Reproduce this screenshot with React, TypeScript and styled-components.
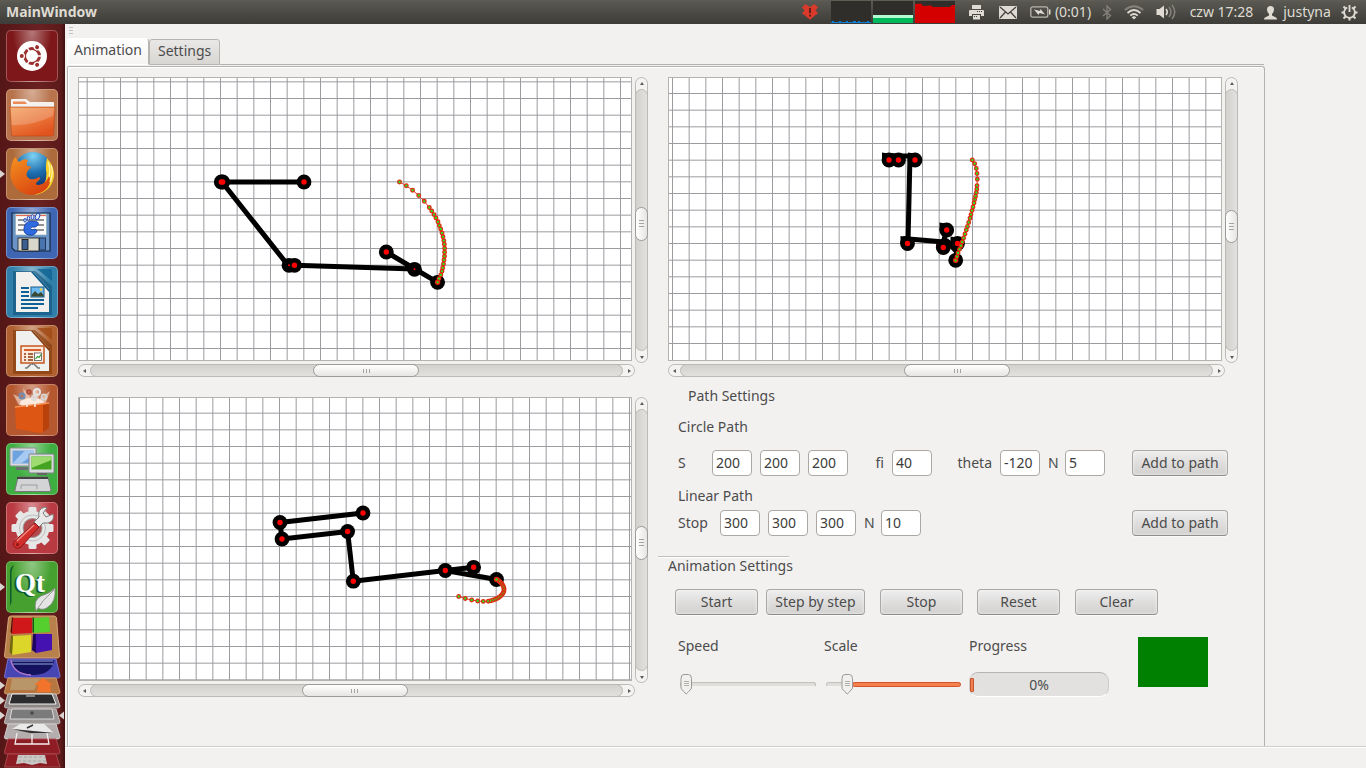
import React, { useState } from "react";
import styled, { createGlobalStyle, css } from "styled-components";

const Global = createGlobalStyle`
  *, *::before, *::after { box-sizing: border-box; }
  body {
    margin: 0;
    background: #f2f1f0;
    color: #4c4c4c;
    font: 14px/20px "Noto Sans", "Open Sans", sans-serif;
  }
  button, input { font: inherit; color: inherit; margin: 0; }
`;

/* ---------- shell ---------- */

const Screen = styled.div`
  display: flex;
  flex-direction: column;
  height: 100vh;
  overflow: hidden;
`;

const TopBar = styled.header`
  display: flex;
  flex: none;
  align-items: center;
  justify-content: space-between;
  height: 24px;
  padding: 0 0 0 6px;
  background: linear-gradient(#5f5d54 0, #57564f 3px, #3d3c38 100%);
  color: #dfdbd2;
`;

const AppTitle = styled.h1`
  margin: 0;
  font-size: 14px;
  line-height: 24px;
  font-weight: 700;
`;

const Indicators = styled.div`
  display: flex;
  align-items: center;
  height: 24px;
  svg { display: block; flex: none; }
`;

const Indicator = styled.div<{ $w: number }>`
  display: flex;
  align-items: center;
  justify-content: center;
  width: ${(p) => p.$w}px;
  height: 24px;
  white-space: nowrap;
`;

const Body = styled.div`
  display: flex;
  flex: 1;
  min-height: 0;
`;

const Launcher = styled.nav`
  display: flex;
  flex: none;
  flex-direction: column;
  gap: 7px;
  width: 65px;
  padding-top: 6px;
  overflow: hidden;
  background: linear-gradient(90deg, #541616, #6a2020 60%, #5c1a1a 94%, #3f0f0f);
`;

const Tile = styled.button<{ $bg: string; $running?: boolean }>`
  position: relative;
  flex: none;
  width: 52px;
  height: 52px;
  margin-left: 6px;
  padding: 0;
  border: 1px solid rgba(255, 255, 255, 0.28);
  border-radius: 5px;
  background: radial-gradient(ellipse at 50% 0, rgba(255, 255, 255, 0.42), transparent 55%), ${(p) => p.$bg};
  svg { display: block; width: 50px; height: 50px; }
  ${(p) =>
    p.$running &&
    css`
      &::before {
        content: "";
        position: absolute;
        left: -7px;
        top: 21px;
        border: 4px solid transparent;
        border-left: 5px solid #d9d4cf;
        border-right: 0;
      }
    `}
`;

const Stack = styled.div`
  flex: none;
  margin-top: -5px;
  svg { display: block; }
`;

const Window = styled.main`
  display: flex;
  flex: 1;
  flex-direction: column;
  min-width: 0;
`;

const ToolStrip = styled.div`
  flex: none;
  height: 14px;
  padding: 3px 4px;
  svg { display: block; }
`;

const Tabs = styled.div`
  display: flex;
  flex: none;
  width: 100%;
  max-width: 1199px;
  height: 27px;
  padding-left: 2px;
  &::after {
    content: "";
    flex: 1;
    border-bottom: 1px solid #b4b2ae;
  }
`;

const Tab = styled.button<{ $active?: boolean }>`
  margin-top: 1px;
  padding: 0 8px 2px;
  border: 1px solid #b8b5b1;
  border-radius: 3px 3px 0 0;
  background: linear-gradient(#e9e8e6, #d8d6d3);
  line-height: 20px;
  ${(p) =>
    p.$active &&
    css`
      margin-top: 0;
      padding: 0 6px 4px;
      border-color: #fff #b8b5b1 transparent #fff;
      background: linear-gradient(#fff, #f5f4f3);
    `}
`;

const Pane = styled.section`
  display: flex;
  flex: 1;
  align-items: flex-start;
  gap: 20px;
  width: 100%;
  max-width: 1198px;
  margin-top: 1px;
  margin-left: 2px;
  padding: 10px 26px 0 10px;
  border: solid #b4b2ae;
  border-width: 1px 1px 0 1px;
  border-radius: 2px 3px 0 0;
  box-shadow: inset 1px 1px 0 #fff;
`;

const StatusBar = styled.footer`
  flex: none;
  height: 22px;
  border-top: 1px solid #cfcdca;
  box-shadow: inset 0 1px 0 #fff;
`;

const Column = styled.div<{ $gap: number }>`
  display: flex;
  flex: 1 1 0;
  flex-direction: column;
  gap: ${(p) => p.$gap}px;
  min-width: 0;
`;

/* ---------- viewports ---------- */

const ViewGrid = styled.div`
  display: grid;
  grid-template-columns: minmax(0, 1fr) 13px;
  grid-template-rows: 287px 13px;
`;

const Canvas = styled.div`
  margin: 0 3px 3px 0;
  border: 1px solid #b5b3b0;
  background: #fff;
  svg { display: block; width: 100%; height: 100%; }
`;

const Bar = styled.div<{ $vertical?: boolean }>`
  display: flex;
  flex-direction: ${(p) => (p.$vertical ? "column" : "row")};
  margin-bottom: ${(p) => (p.$vertical ? 1 : 0)}px;
  border: 1px solid #bcbab7;
  border-radius: 7px;
  background: #f4f3f2;
`;

const Arrow = styled.button`
  display: flex;
  flex: none;
  align-items: center;
  justify-content: center;
  width: 11px;
  height: 11px;
  padding: 0;
  border: 0;
  background: none;
`;

const Track = styled.div<{ $vertical?: boolean }>`
  position: relative;
  flex: 1;
  margin: ${(p) => (p.$vertical ? "0 -1px" : "-1px 0")};
  border: 1px solid #bcbab7;
  border-radius: 7px;
  background: linear-gradient(${(p) => (p.$vertical ? "90deg" : "180deg")}, #d3d1ce, #e2e1df);
`;

const Thumb = styled.div<{ $vertical?: boolean }>`
  position: absolute;
  display: flex;
  align-items: center;
  justify-content: center;
  border: 1px solid #9d9b98;
  border-radius: 7px;
  background: linear-gradient(${(p) => (p.$vertical ? "90deg" : "180deg")}, #fff, #e6e5e3);
  ${(p) => (p.$vertical ? "left: -1px; right: -1px; height: 13%;" : "top: -1px; bottom: -1px; width: 20%;")}
`;

type Pt = [number, number];

const ARROWS = {
  up: "1,4 5,4 3,1",
  down: "1,2 5,2 3,5",
  left: "4,1 4,5 1,3",
  right: "2,1 2,5 5,3",
};

function ArrowIcon({ dir }: { dir: keyof typeof ARROWS }) {
  return (
    <svg width="6" height="6" viewBox="0 0 6 6">
      <polygon points={ARROWS[dir]} fill="#5c5b59" />
    </svg>
  );
}

function Scrollbar({ vertical, at }: { vertical?: boolean; at: number }) {
  return (
    <Bar $vertical={vertical}>
      <Arrow aria-label={vertical ? "Scroll up" : "Scroll left"}>
        <ArrowIcon dir={vertical ? "up" : "left"} />
      </Arrow>
      <Track $vertical={vertical}>
        <Thumb $vertical={vertical} style={vertical ? { top: `${at}%` } : { left: `${at}%` }}>
          <svg width="7" height="7" viewBox="0 0 7 7">
            <path
              d={vertical ? "M1 .5H6M1 3.5H6M1 6.5H6" : "M.5 2V6M3.5 2V6M6.5 2V6"}
              stroke="#a5a3a0"
            />
          </svg>
        </Thumb>
      </Track>
      <Arrow aria-label={vertical ? "Scroll down" : "Scroll right"}>
        <ArrowIcon dir={vertical ? "down" : "right"} />
      </Arrow>
    </Bar>
  );
}

interface Scene {
  name: string;
  origin: Pt;
  grid: Pt;
  links: string;
  blobs?: Pt[];
  joints: Pt[];
  path: Pt[];
  h: number;
  v: number;
}

const STEP = 50 / 3;

const front: Scene = {
  name: "Front view",
  origin: [79, 78],
  grid: [220.5, 98.5],
  links: "M304 182H222L288 265.3L294.5 265.3L414.5 269M386.3 252L437.6 282.3",
  joints: [[221.3, 182], [222.7, 182], [304, 182], [289, 265.3], [294.5, 265.3], [386.3, 252], [414.5, 269.3], [437.6, 282.3]],
  path: [
    [399.5, 182], [406.3, 185.7], [412.6, 190.2], [418.7, 195.5], [424.3, 201.3], [429.3, 207.5], [431.7, 211],
    [434, 214.6], [436, 218], [438, 221.8], [439.3, 225.6], [440.7, 229], [442, 233], [443, 236.8], [443.8, 240.6],
    [444.3, 244.3], [444.6, 248.3], [444.6, 252.3], [444.5, 256.3], [444, 260], [443.5, 264], [442.7, 268],
    [442, 271.3], [440.8, 275], [439, 278.6], [437.6, 282.3],
  ],
  h: 41.8,
  v: 45,
};

const side: Scene = {
  name: "Side view",
  origin: [669, 78],
  grid: [972.5, 143.5],
  links: "M884 156H914M910 155L908 242M903 238.5L950 242.5M946.7 230L942 247M957.5 243.5L955.7 260.3M946 240L957 252",
  blobs: [[882, 152.5], [891.5, 153], [908, 152.5], [900.5, 236], [939.5, 222.5], [936.3, 240.5], [950.5, 236.5]],
  joints: [[889, 160], [898.5, 160], [915, 160], [907.5, 243.5], [946.7, 230], [957.5, 243.5], [943.3, 247.5], [955.7, 260.3]],
  path: [
    [972.3, 160], [974.7, 163.7], [976.3, 168.5], [977, 173.5], [977.3, 179.3], [977, 185.6], [976.8, 189.2],
    [976.3, 192.6], [975.5, 196.2], [974.7, 199.6], [974, 203], [973, 207], [972, 210.6], [971, 214.6],
    [970, 218.3], [968.7, 222.4], [967.5, 226.5], [966.3, 230], [965, 234], [963.6, 238], [962.2, 242],
    [961, 245.7], [959.5, 249.3], [958, 253], [957, 256.6], [955.6, 260.5],
  ],
  h: 42,
  v: 46,
};

const top: Scene = {
  name: "Top view",
  origin: [79, 398],
  grid: [279.5, 496.5],
  links: "M363 513L280 522.5L282 539L347.6 531.5L353.3 581.2L445.3 570.5L473.6 567.3M445.3 570.5L496.5 579.5",
  joints: [[280, 522.5], [363, 513], [282, 539], [347.6, 531.5], [353.3, 581.2], [473.6, 567.3], [445.3, 570.5], [496.5, 579.5]],
  path: [
    [458.7, 596.5], [465.3, 598.5], [471.7, 600], [477.7, 601], [483.3, 601.4], [488.3, 601.2], [491, 600.7],
    [493.3, 600], [495.5, 599.3], [497.5, 598.3], [499.2, 597.2], [500.7, 596], [502, 594.6], [503, 593.2],
    [503.8, 591.6], [504, 590], [504, 588.5], [503.6, 587], [502.8, 585.5], [502, 584], [501, 583], [500, 582],
    [499, 581], [497.5, 580], [496.5, 579.5],
  ],
  h: 39.7,
  v: 44.6,
};

function gridLines(anchor: number, from: number, to: number) {
  const out: number[] = [];
  const first = anchor - Math.floor((anchor - from) / STEP) * STEP;
  for (let i = 0; first + i * STEP < to; i++) out.push(first + i * STEP);
  return out;
}

function View({ scene }: { scene: Scene }) {
  const [ox, oy] = scene.origin;
  const w = 552;
  const h = 282;
  return (
    <ViewGrid>
      <Canvas>
        <svg viewBox={`${ox} ${oy} ${w} ${h}`} preserveAspectRatio="xMidYMid slice" role="img" aria-label={scene.name}>
          <g stroke="#9c9ca0">
            {gridLines(scene.grid[0], ox, ox + w).map((x) => (
              <line key={x} x1={x} x2={x} y1={oy} y2={oy + h} />
            ))}
            {gridLines(scene.grid[1], oy, oy + h).map((y) => (
              <line key={y} x1={ox} x2={ox + w} y1={y} y2={y} />
            ))}
          </g>
          <path d={scene.links} fill="none" stroke="#000" strokeWidth="5" />
          {scene.blobs?.map(([x, y]) => (
            <path key={x} d={`M${x} ${y}l6 1l2 7h-8z`} />
          ))}
          {scene.joints.map(([x, y], i) => <circle key={i} cx={x} cy={y} r="7.4" />)}
          {scene.joints.map(([x, y], i) => (
            <circle key={i} cx={x} cy={y} r={scene === front && (i === 6 || i === 3) ? 1 : 2.7} fill="#f00" />
          ))}
          <polyline points={scene.path.join(" ")} fill="none" stroke="#e23a1c" />
          {scene.path.map(([x, y], i) => (
            <circle key={i} cx={x} cy={y} r="1.8" fill="#1cf01c" stroke="#e02a14" strokeWidth="1.3" />
          ))}
        </svg>
      </Canvas>
      <Scrollbar vertical at={scene.v} />
      <Scrollbar at={scene.h} />
    </ViewGrid>
  );
}

/* ---------- forms ---------- */

const Settings = styled.div`
  padding: 0 10px;
`;

const Heading = styled.h2<{ $indent?: boolean }>`
  margin: 0;
  padding-left: ${(p) => (p.$indent ? 10 : 0)}px;
  font-size: 14px;
  line-height: 20px;
  font-weight: 400;
`;

const PathForm = styled.form<{ $top: number }>`
  margin-top: ${(p) => p.$top}px;
`;

const Fields = styled.div<{ $top: number }>`
  display: flex;
  align-items: center;
  gap: 8px;
  margin-top: ${(p) => p.$top}px;
`;

const Caption = styled.label<{ $w: number; $right?: boolean }>`
  flex: none;
  width: ${(p) => p.$w}px;
  text-align: ${(p) => (p.$right ? "right" : "left")};
`;

const Field = styled.input`
  width: 40px;
  height: 26px;
  padding: 0 3px 2px;
  border: 1px solid #aba8a4;
  border-radius: 4px;
  background: #fff;
  color: #3c3c3c;
`;

const Push = styled.button<{ $w: number; $left?: number }>`
  flex: none;
  width: ${(p) => p.$w}px;
  height: 26px;
  margin-left: ${(p) => p.$left ?? 0}px;
  padding: 0;
  border: 1px solid #aaa8a6;
  border-bottom-color: #8f8d8b;
  border-radius: 4px;
  background: linear-gradient(#efeeee, #dcdbda 60%, #d2d1d0);
  box-shadow: 0 1px 0 #fafafa, inset 0 0 3px #f6f6f6;
  white-space: nowrap;
`;

const FormEnd = styled.div`
  margin-left: auto;
`;

const Divider = styled.hr`
  width: 131px;
  height: 2px;
  margin: 20px 0 0 -20px;
  border: 0;
  border-top: 1px solid #c0bebb;
  border-bottom: 1px solid #fff;
`;

const AnimationSettings = styled.section`
  margin: -2px 0 0 -10px;
`;

const ButtonRow = styled.div`
  display: flex;
  margin: 13px 0 0 7px;
`;

const Meters = styled.div`
  display: grid;
  grid-template-columns: 138px 137px 140px 70px;
  column-gap: 8px;
  margin: 21px 0 0 10px;
`;

const Meter = styled.div`
  display: flex;
  flex-direction: column;
  gap: 16px;
`;

const SliderBox = styled.div`
  position: relative;
  height: 26px;
  margin-left: 2px;
`;

const Groove = styled.div<{ $hot?: boolean }>`
  position: absolute;
  left: 0;
  right: 0;
  top: 10px;
  height: 5px;
  border: 1px solid #c3c1bd;
  border-bottom-color: #f3f3f3;
  border-radius: 3px;
  background: #e0deda;
  ${(p) =>
    p.$hot &&
    css`
      border-color: #d2562c;
      background: #f5814f;
    `}
`;

const Range = styled.input`
  position: absolute;
  inset: 0;
  width: 100%;
  height: 26px;
  opacity: 0;
`;

const Knob = styled.svg`
  position: absolute;
  top: 2px;
  pointer-events: none;
`;

const Progress = styled.div`
  position: relative;
  height: 25px;
  border: 1px solid #cfcdca;
  border-top-color: #b7b5b2;
  border-bottom-color: #fff;
  border-radius: 9px;
  background: #e2e1df;
  line-height: 23px;
  text-align: center;
  &::before {
    content: "";
    position: absolute;
    left: 0;
    top: 5px;
    width: 4px;
    height: 14px;
    border: 1px solid #c4552c;
    border-radius: 1px;
    background: #f08050;
  }
`;

const StateLamp = styled.div`
  width: 70px;
  height: 50px;
  margin: 1px 0 0 21px;
  background: #008000;
`;

function Slider({ id, initial, fillAfter }: { id: string; initial: number; fillAfter?: boolean }) {
  const [value, setValue] = useState(initial);
  return (
    <SliderBox>
      <Groove />
      {fillAfter && <Groove $hot style={{ left: `${value + 8}%` }} />}
      <Range id={id} type="range" value={value} onChange={(e) => setValue(Number(e.target.value))} />
      <Knob width="13" height="21" viewBox="0 0 13 21" style={{ left: `${value}%` }}>
        <path
          d="M1 4.5Q1 .5 4 .5H8.500Q11.500 .5 11.500 4.500V14Q11.500 15 6.200 20Q1 15 1 14Z"
          fill="#f1f0ef"
          stroke="#9b9996"
        />
        <path d="M4 7.500H9M4 9.500H9M4 11.500H9" stroke="#b2b0ad" />
      </Knob>
    </SliderBox>
  );
}

/* ---------- launcher artwork ---------- */

const dots = [0, 120, 240];

const Dash = () => (
  <svg viewBox="0 0 50 50">
    <circle cx="25" cy="25" r="15" fill="#fff" />
    <circle cx="25" cy="25" r="7.500" fill="none" stroke="#9b3030" strokeWidth="3" />
    {dots.map((a) => (
      <g key={a} transform={`rotate(${a} 25 25)`}>
        <circle cx="14.500" cy="25" r="3.500" fill="#fff" />
        <circle cx="14.800" cy="25" r="2" fill="#9b3030" />
        <path d="M35 25H30" stroke="#fff" strokeWidth="1.500" />
      </g>
    ))}
  </svg>
);

const Files = () => (
  <svg viewBox="0 0 50 50">
    <defs>
      <linearGradient id="folder" x2=".6" y2="1">
        <stop offset="0" stopColor="#f3a05c" />
        <stop offset="1" stopColor="#e2541f" />
      </linearGradient>
    </defs>
    <path d="M4 18V10Q4 9 5 9H19L23 12H46Q47 12 47 13V18Z" fill="#f4f1ee" />
    <path d="M6 11.500H18L20 14H6Z" fill="#eb8a57" />
    <path d="M3 17H48L46.500 45Q46 46 45 46H6Q5 46 4.500 45Z" fill="url(#folder)" stroke="#b5491a" strokeWidth=".6" />
    <path d="M4 18H47L46 26Q25 36 4.500 35Z" fill="#fff" opacity=".2" />
  </svg>
);

const Firefox = () => (
  <svg viewBox="0 0 50 50">
    <defs>
      <radialGradient id="globe" cx=".5" cy=".1" r=".9">
        <stop offset="0" stopColor="#7fd2f2" />
        <stop offset=".5" stopColor="#1d6fb0" />
        <stop offset="1" stopColor="#0c2a63" />
      </radialGradient>
      <linearGradient id="fox" x1=".2" y1="0" x2=".8" y2="1">
        <stop offset="0" stopColor="#f28a1e" />
        <stop offset="1" stopColor="#d8400f" />
      </linearGradient>
    </defs>
    <circle cx="26" cy="22" r="19" fill="url(#globe)" />
    <path d="M40 9Q48 18 47 28Q44 43 28 46Q40 37 39.500 24Q38 18 40 9Z" fill="#f8cf28" />
    <path d="M8 8L12 13Q17 9 21 11Q19 14 20 17Q25 17 24 19Q20 21 20 24Q18 27 23 30Q28 31 32 28Q35 29 30 33Q27 36 32 36Q40 34 42 26Q46 38 33 44Q20 49 10 40Q1 31 4 19Q5 12 8 8Z" fill="url(#fox)" />
    <path d="M41 13Q44 20 42 28M44 16Q47 24 43 33" stroke="#fff1a0" strokeWidth="1.400" fill="none" />
  </svg>
);

const Floppy = () => (
  <svg viewBox="0 0 50 50">
    <path d="M5 5H43V43H8L5 40Z" fill="#6a94c8" stroke="#17273f" strokeWidth="1.200" />
    <rect x="8.500" y="6" width="31" height="21" fill="#fafafa" stroke="#8aa" strokeWidth=".6" />
    <path d="M9 7.500H39" stroke="#e46a55" strokeWidth="1.200" />
    <path d="M11 12H37M11 17H37M11 22H37" stroke="#111" strokeWidth=".9" />
    <path d="M17 20Q18 13 25 13Q33 13 31 17Q29 20 25 19Q22 20 25 22Q29 20 30 23Q28 28 22 27Q16 26 17 20Z" fill="#2f6be0" stroke="#123a9c" strokeWidth=".8" />
    <g fill="#dce8ff" stroke="#1b49b8">
      <ellipse cx="30.500" cy="8.500" rx="2" ry="3.300" transform="rotate(25 30.500 8.500)" />
      <ellipse cx="25.500" cy="9" rx="1.500" ry="2.300" />
      <ellipse cx="21.500" cy="10.300" rx="1.300" ry="2" />
      <ellipse cx="18" cy="12.300" rx="1.200" ry="1.800" />
    </g>
    <rect x="11" y="30" width="21" height="13" fill="#d9d6cc" stroke="#222" strokeWidth=".8" />
    <rect x="15" y="31.500" width="6" height="10" fill="#3b5e91" stroke="#111" strokeWidth=".8" />
    <rect x="32.500" y="30" width="6" height="12" fill="#4a74ad" stroke="#17273f" strokeWidth=".8" />
  </svg>
);

const Writer = () => (
  <svg viewBox="0 0 50 50">
    <path d="M6 4H28L45 19V48H6Z" fill="#0c4e75" opacity=".55" />
    <path d="M30 2H43Q45 2 45 4V14Z" fill="#0f6392" opacity=".8" />
    <path d="M9 5H26L42 22V45H9Z" fill="#f0f0ef" />
    <path d="M26 5L42 22V25L24 5Z" fill="#0b5c8c" />
    <path d="M14 21H22M14 25H22M14 29H22M14 33H37M14 37H37M14 41H31" stroke="#106196" strokeWidth="1.800" />
    <rect x="24" y="20" width="13" height="10" fill="#6dbaf0" stroke="#155a8a" />
    <path d="M24.500 29.500V28L28 24L31 27L34 25L36.500 28V29.500Z" fill="#3b4a32" />
    <circle cx="34" cy="22.500" r="1.300" fill="#f5d33c" />
  </svg>
);

const Impress = () => (
  <svg viewBox="0 0 50 50">
    <path d="M6 4H28L45 19V48H6Z" fill="#7a3408" opacity=".55" />
    <path d="M30 2H43Q45 2 45 4V14Z" fill="#a04a14" opacity=".8" />
    <path d="M9 5H26L42 22V45H9Z" fill="#f0f0ef" />
    <path d="M26 5L42 22V25L24 5Z" fill="#8a3c0c" />
    <rect x="14" y="20" width="23" height="17" fill="#fbe9dd" stroke="#bf4c12" strokeWidth="1.400" />
    <path d="M17 24H34" stroke="#d8622a" strokeWidth="2" />
    <path d="M17 28H19M17 31H19M17 34H19M21 28H26M21 31H26M21 34H26" stroke="#8a3c0c" strokeWidth="1.600" />
    <rect x="27.500" y="27" width="7" height="7.500" fill="#fff" stroke="#555" strokeWidth=".8" />
    <path d="M28.500 33L30.500 30.500L32 31.500L34 28.500" stroke="#2c9a2c" strokeWidth="1.200" fill="none" />
    <path d="M25.500 37V39M24 38L20 42H18M27 38L31 42H33" stroke="#777" strokeWidth="1.600" fill="none" />
  </svg>
);

const SoftwareCentre = () => (
  <svg viewBox="0 0 50 50">
    <path d="M12 20L6 9L18 15L16 3L24 13L30 2L32 14L43 6L38 20Z" fill="#f9e2d6" opacity=".6" />
    <ellipse cx="25" cy="18" rx="12" ry="5" fill="#fff6ee" opacity=".8" />
    <g fill="none" strokeWidth="2">
      <circle cx="15" cy="11" r="2.500" stroke="#6f8db5" />
      <circle cx="30" cy="7" r="3" stroke="#e6e6e6" />
      <circle cx="22" cy="7" r="1.800" stroke="#b04a36" />
      <circle cx="37" cy="12" r="2.400" stroke="#d9d2cc" />
      <circle cx="27" cy="13" r="2" stroke="#ddd" />
    </g>
    <path d="M8 22L42 18L42 43L34 48L9 44Z" fill="#dd5614" />
    <path d="M36 20L42 18L42 43L36 47Z" fill="#b9420c" />
    <path d="M8 22L42 18" stroke="#f59255" strokeWidth="1.500" />
    <path d="M20 22V18H28V22" fill="none" stroke="#fbe7da" strokeWidth="1.600" />
  </svg>
);

const Remote = () => (
  <svg viewBox="0 0 50 50">
    <rect x="3" y="4" width="26" height="18" rx="1" fill="#d8dadd" stroke="#8c9094" />
    <rect x="5.500" y="6.500" width="21" height="13" fill="#6fa3e0" />
    <path d="M5.500 19.500L18 6.500H26.500V10L14 19.500Z" fill="#a6caf2" />
    <path d="M9 23H21V26H9Z" fill="#6b6f73" />
    <rect x="22" y="10" width="25" height="19" rx="1" fill="#d8dadd" stroke="#7d8185" />
    <rect x="24.500" y="12.500" width="20" height="13" fill="#45a321" />
    <path d="M24.500 24L44.500 16V12.500H24.500Z" fill="#9ddb70" />
    <path d="M30 29H40V31H30Z" fill="#666" />
    <path d="M11 33H41L44 46Q44 47.500 42 47.500H9Q7 47.500 8 46Z" fill="#d3d4d5" stroke="#777" />
    <path d="M10 34H41" stroke="#444" strokeWidth="2" />
    <path d="M14 45V41H30V45" fill="none" stroke="#9a9c9e" />
  </svg>
);

const SystemSettings = () => (
  <svg viewBox="0 0 50 50">
    <g fill="#e6e6e6">
      {[0, 45, 90, 135].map((a) => (
        <rect key={a} x="21.500" y="4" width="8" height="42" rx="1.500" transform={`rotate(${a} 25.500 25)`} />
      ))}
      <circle cx="25.500" cy="25" r="17" />
    </g>
    <circle cx="25.500" cy="25" r="13" fill="none" stroke="#bdbdbd" />
    <circle cx="25.500" cy="25" r="9.500" fill="#b3494c" stroke="#9c9c9c" />
    <path d="M27 19L32 14Q30 6 38 4L40 5L36 10L39 14L46 11Q48 18 41 20L36 20L32 24Z" fill="#e9e9e9" stroke="#7c7c7c" />
    <path d="M28 20L32 24L15 43Q11 47 7.500 44Q4.500 41 8.500 37Z" fill="#d02f2b" stroke="#8e1717" />
    <path d="M27 22L10 38" stroke="#f28a80" strokeWidth="1.500" />
    <circle cx="10.500" cy="41.500" r="1.500" fill="#8e1717" />
  </svg>
);

const QtText = styled.text`
  font: 700 27px "Liberation Serif", serif;
`;

const QtCreator = () => (
  <svg viewBox="0 0 50 50">
    <path d="M3 44V10Q3 5 7 3Q4 8 4.500 14V40Z" fill="#0d5a2b" />
    <QtText x="6" y="31" fill="#0d5a2b">Qt</QtText>
    <QtText x="8" y="30" fill="#fff">Qt</QtText>
    <path d="M29 49Q26 38 34 34Q44 31 48 26Q49 40 41 45Q36 49 31 46Z" fill="#e4e4e4" stroke="#888" strokeWidth=".8" />
    <path d="M29 49Q35 38 47 28" stroke="#999" fill="none" />
  </svg>
);

const FoldedStack = () => (
  <svg width="65" height="153" viewBox="0 615 65 153">
    <path d="M11 616H54Q56 616 56.500 618L59.500 656Q59.500 658 57 658H7Q4.500 658 4.500 656L8.500 618Q9 616 11 616Z" fill="#b8804a" stroke="#d6a878" />
    <path d="M13 618L32 618L32 633L12 634Z" fill="#d0181a" /><path d="M13 618L12 634L10.500 632L12 617Z" fill="#5b0707" />
    <path d="M34 618L49 617L50 632L34 633Z" fill="#55cf2e" /><path d="M34 618V633L32.500 632V617Z" fill="#14580f" />
    <path d="M13 636L31 635L31 652L12 655Z" fill="#ddd62a" /><path d="M13 636L12 655L9.500 652L11 635Z" fill="#6d6a0b" />
    <path d="M36 634H52V650L36 653Z" fill="#4312b0" /><path d="M36 634V653L32 650L33 634Z" fill="#1d0560" />
    <path d="M8 659H56L60 676Q60 678 57 678H7Q4 678 4.500 676Z" fill="#4746b4" stroke="#7271cf" />
    <path d="M11 660H54Q52 675 32 675Q13 674 11 660Z" fill="#14125e" />
    <path d="M11 660Q13 674 31 675" stroke="#b77bd0" strokeWidth="1.500" fill="none" />
    <path d="M12 661H53M13 664H53" stroke="#8fa5dc" />
    <path d="M8 678H56L60 692Q60 694 57 694H7Q4 694 4.500 692Z" fill="#b57641" stroke="#d1996a" />
    <path d="M12 679H40L34 690H10Z" fill="#b8966a" />
    <path d="M43 678L53 685H50L51 692H37L38 685H34Z" fill="#f2742c" />
    <path d="M8 694H56L60 706Q60 708 57 708H7Q4 708 4.500 706Z" fill="#8d8886" stroke="#c5c0be" />
    <path d="M12 694H52L56 704H9Z" fill="#2c2c2e" stroke="#f2f2f2" /><path d="M26 696H35" stroke="#d8d8d8" />
    <path d="M8 709H56L60 722Q60 724 57 724H7Q4 724 4.500 722Z" fill="#9c9897" stroke="#c5c0be" />
    <path d="M12 709H52L54 719H10Z" fill="#7b7b7b" stroke="#d9d9d9" /><circle cx="32" cy="713" r="1.800" fill="#4a4a4a" />
    <path d="M8 724H56L60 737Q60 739 57 739H7Q4 739 4.500 737Z" fill="#b4aeae" stroke="#d2cdcd" />
    <path d="M20 724H44L54 733L12 729Z" fill="#e9e9e9" /><path d="M12 729L54 733H30Z" fill="#333" />
    <path d="M27 728L33 725" stroke="#333" strokeWidth="1.500" />
    <path d="M8 739H56L60 752Q60 754 57 754H7Q4 754 4.500 752Z" fill="#8e1c24" stroke="#a8464c" />
    <path d="M17 733L15 744H49L47 733M32 734V744" fill="none" stroke="#f3eded" strokeWidth="1.300" />
    <path d="M8 754H56L60 767H4.500Z" fill="#8e1c24" stroke="#a8464c" />
    <path d="M18 755L16 764L24 763L32 765L40 763L47 764L45 755Z" fill="#c9c7c3" />
    <path d="M19 757H45M18 761H46" stroke="#a9a6a2" strokeDasharray="3 2" />
    <g fill="#d9d4cf">
      <path d="M0 681.500L5 685.500L0 689.500ZM0 696.500L5 700.500L0 704.500ZM0 711.500L5 715.500L0 719.500ZM64 711.500L59 715.500L64 719.500Z" />
    </g>
  </svg>
);

const launcherItems = [
  { name: "Dash home", bg: "#7d1719", Icon: Dash },
  { name: "Files", bg: "#b8734c", Icon: Files },
  { name: "Firefox", bg: "#ad6a3b", Icon: Firefox, running: true },
  { name: "File backup", bg: "#3f66b3", Icon: Floppy },
  { name: "Writer", bg: "#2f7faa", Icon: Writer },
  { name: "Impress", bg: "#b0602f", Icon: Impress },
  { name: "Software Centre", bg: "#b5572f", Icon: SoftwareCentre },
  { name: "Remote desktop", bg: "#3eae40", Icon: Remote },
  { name: "System Settings", bg: "#b93a41", Icon: SystemSettings },
  { name: "Qt Creator", bg: "#45a02f", Icon: QtCreator, running: true },
];

/* ---------- indicator artwork ---------- */

const LIGHT = "#dfdbd2";

const DropIcon = () => (
  <svg width="18" height="18" viewBox="0 0 20 18">
    <path d="M5 0L10 3.500L15 0L19 4L16 7L19 10.500L15.500 13L10 17.500L4.500 13L1 10.500L4 7L1 4Z" fill="#d93a2b" />
    <path d="M10 4.500V10.500M10 12V14" stroke="#5b1c17" strokeWidth="2" />
  </svg>
);

const Graphs = () => (
  <svg width="124" height="24" viewBox="0 0 124 24">
    <g fill="#2f2e2b">
      <rect y="1" width="40" height="22" /><rect x="42" y="1" width="40" height="22" /><rect x="84" y="1" width="40" height="22" />
    </g>
    <path d="M0 22.500H40M1 21.500H3M8 21.500H10M15 21.500H17M22 21.500H25M27 21.500H29M36 21.500H38" stroke="#0b7fd8" />
    <rect x="42" y="15" width="40" height="8" fill="#00b85c" />
    <rect x="42" y="15" width="40" height="3" fill="#b4fbd2" />
    <path d="M84 4L90 3.500L92 6L100 5.500L102 7H119L121 5H124V23H84Z" fill="#d40000" />
  </svg>
);

const PrinterIcon = () => (
  <svg width="17" height="17" viewBox="0 0 17 17">
    <path d="M4 1H13V5H4Z" fill={LIGHT} />
    <path d="M2 6H15Q16 6 16 7V12H13V10H4V12H1V7Q1 6 2 6Z" fill={LIGHT} />
    <path d="M5 11H12V15.500H5Z" fill={LIGHT} />
    <path d="M6 12.500H10M9 7.500H14" stroke="#45443f" strokeDasharray="1 1" />
  </svg>
);

const MailIcon = () => (
  <svg width="18" height="13" viewBox="0 0 18 13">
    <rect width="18" height="13" rx="1" fill={LIGHT} />
    <path d="M1 1L9 8L17 1M1 12L6.500 6M17 12L11.500 6" fill="none" stroke="#45443f" strokeWidth="1.300" />
  </svg>
);

const BatteryIcon = () => (
  <svg width="21" height="12" viewBox="0 0 21 12">
    <rect x=".8" y=".8" width="17" height="10.400" rx="2" fill="none" stroke="#b9b5ad" strokeWidth="1.300" />
    <path d="M19 3.500H20.500V8.500H19" fill={LIGHT} />
    <path d="M4 3.500L10 5L10.500 3L15 8.500L9.500 7L8.500 9Z" fill={LIGHT} />
  </svg>
);

const BluetoothIcon = () => (
  <svg width="10" height="15" viewBox="0 0 10 15">
    <path d="M1 4L8.500 10.500L5 14V1L8.500 4.500L1 11" fill="none" stroke="#85827a" strokeWidth="1.300" />
  </svg>
);

const WifiIcon = () => (
  <svg width="20" height="15" viewBox="0 0 20 15" fill="none">
    <path d="M.8 5Q10-2.500 19.200 5" stroke="#85827a" strokeWidth="1.800" />
    <path d="M3.500 8Q10 2 16.500 8M6.300 10.700Q10 7.300 13.700 10.700" stroke={LIGHT} strokeWidth="1.800" />
    <path d="M7.700 12.200Q10 10.500 12.300 12.200L10 14.500Z" fill={LIGHT} />
  </svg>
);

const VolumeIcon = () => (
  <svg width="20" height="16" viewBox="0 0 20 16" fill="none">
    <path d="M.5 5H3.500L8 1.500V14.500L3.500 11H.5Z" fill={LIGHT} />
    <path d="M10 5Q12.500 8 10 11" stroke={LIGHT} strokeWidth="1.600" />
    <path d="M13 3Q17 8 13 13M16 1Q21.500 8 16 15" stroke="#85827a" strokeWidth="1.500" />
  </svg>
);

const UserIcon = () => (
  <svg width="13" height="15" viewBox="0 0 13 15">
    <path d="M6.500 1Q10 1 10 4.500Q10 7.500 8 9V10.500L12 12.500Q13 13 13 14.500H0Q0 13 1 12.500L5 10.500V9Q3 7.500 3 4.500Q3 1 6.500 1Z" fill={LIGHT} />
  </svg>
);

const PowerIcon = () => (
  <svg width="17" height="17" viewBox="0 0 17 17" fill="none" stroke={LIGHT}>
    <path d="M10.800 3.500A5.400 5.400 0 1 1 6.200 3.500" strokeWidth="1.800" />
    <path d="M8.500 1V8" strokeWidth="1.800" />
    <path d="M2.500 2.500L4.500 4.500M14.500 2.500L12.500 4.500M.5 8.500H3M16.500 8.500H14M2.500 14.500L4.500 12.500M14.500 14.500L12.500 12.500M8.500 14V16.500" strokeWidth="2" />
  </svg>
);

/* ---------- page ---------- */

export default function App() {
  return (
    <Screen>
      <Global />
      <TopBar>
        <AppTitle>MainWindow</AppTitle>
        <Indicators>
          <Indicator $w={22}><DropIcon /></Indicator>
          <Indicator $w={144}><Graphs /></Indicator>
          <Indicator $w={22}><PrinterIcon /></Indicator>
          <Indicator $w={42}><MailIcon /></Indicator>
          <Indicator $w={23}><BatteryIcon /></Indicator>
          <Indicator $w={42}>(0:01)</Indicator>
          <Indicator $w={26}><BluetoothIcon /></Indicator>
          <Indicator $w={28}><WifiIcon /></Indicator>
          <Indicator $w={36}><VolumeIcon /></Indicator>
          <Indicator $w={75}>czw 17:28</Indicator>
          <Indicator $w={23}><UserIcon /></Indicator>
          <Indicator $w={50}>justyna</Indicator>
          <Indicator $w={34}><PowerIcon /></Indicator>
        </Indicators>
      </TopBar>
      <Body>
        <Launcher aria-label="Launcher">
          {launcherItems.map(({ name, bg, Icon, running }) => (
            <Tile key={name} $bg={bg} $running={running} aria-label={name}>
              <Icon />
            </Tile>
          ))}
          <Stack><FoldedStack /></Stack>
        </Launcher>
        <Window>
          <ToolStrip>
            <svg width="4" height="9" viewBox="0 0 4 9">
              <path d="M0 .5H4M0 3.500H4M0 6.500H4" stroke="#c4c2bf" />
            </svg>
          </ToolStrip>
          <Tabs role="tablist">
            <Tab role="tab" aria-selected $active>Animation</Tab>
            <Tab role="tab" aria-selected={false}>Settings</Tab>
          </Tabs>
          <Pane>
            <Column $gap={20}>
              <View scene={front} />
              <View scene={top} />
            </Column>
            <Column $gap={9}>
              <View scene={side} />
              <Settings>
                <Heading $indent>Path Settings</Heading>
                <PathForm $top={11} onSubmit={(e) => e.preventDefault()}>
                  <Heading>Circle Path</Heading>
                  <Fields $top={13}>
                    <Caption htmlFor="sx" $w={26}>S</Caption>
                    <Field id="sx" defaultValue="200" />
                    <Field aria-label="S y" defaultValue="200" />
                    <Field aria-label="S z" defaultValue="200" />
                    <Caption htmlFor="fi" $w={28} $right>fi</Caption>
                    <Field id="fi" defaultValue="40" />
                    <Caption htmlFor="theta" $w={52} $right>theta</Caption>
                    <Field id="theta" defaultValue="-120" />
                    <Caption htmlFor="cn" $w={9}>N</Caption>
                    <Field id="cn" defaultValue="5" />
                    <FormEnd><Push $w={96}>Add to path</Push></FormEnd>
                  </Fields>
                </PathForm>
                <PathForm $top={10} onSubmit={(e) => e.preventDefault()}>
                  <Heading>Linear Path</Heading>
                  <Fields $top={4}>
                    <Caption htmlFor="px" $w={34}>Stop</Caption>
                    <Field id="px" defaultValue="300" />
                    <Field aria-label="Stop y" defaultValue="300" />
                    <Field aria-label="Stop z" defaultValue="300" />
                    <Caption htmlFor="ln" $w={9}>N</Caption>
                    <Field id="ln" defaultValue="10" />
                    <FormEnd><Push $w={96}>Add to path</Push></FormEnd>
                  </Fields>
                </PathForm>
                <Divider />
                <AnimationSettings>
                  <Heading>Animation Settings</Heading>
                  <ButtonRow>
                    <Push $w={83}>Start</Push>
                    <Push $w={99} $left={8}>Step by step</Push>
                    <Push $w={83} $left={15}>Stop</Push>
                    <Push $w={83} $left={14}>Reset</Push>
                    <Push $w={83} $left={15}>Clear</Push>
                  </ButtonRow>
                  <Meters>
                    <Meter>
                      <label htmlFor="speed">Speed</label>
                      <Slider id="speed" initial={0} />
                    </Meter>
                    <Meter>
                      <label htmlFor="scale">Scale</label>
                      <Slider id="scale" initial={11} fillAfter />
                    </Meter>
                    <Meter>
                      <span id="progress">Progress</span>
                      <Progress role="progressbar" aria-labelledby="progress" aria-valuenow={0}>0%</Progress>
                    </Meter>
                    <StateLamp />
                  </Meters>
                </AnimationSettings>
              </Settings>
            </Column>
          </Pane>
          <StatusBar />
        </Window>
      </Body>
    </Screen>
  );
}
